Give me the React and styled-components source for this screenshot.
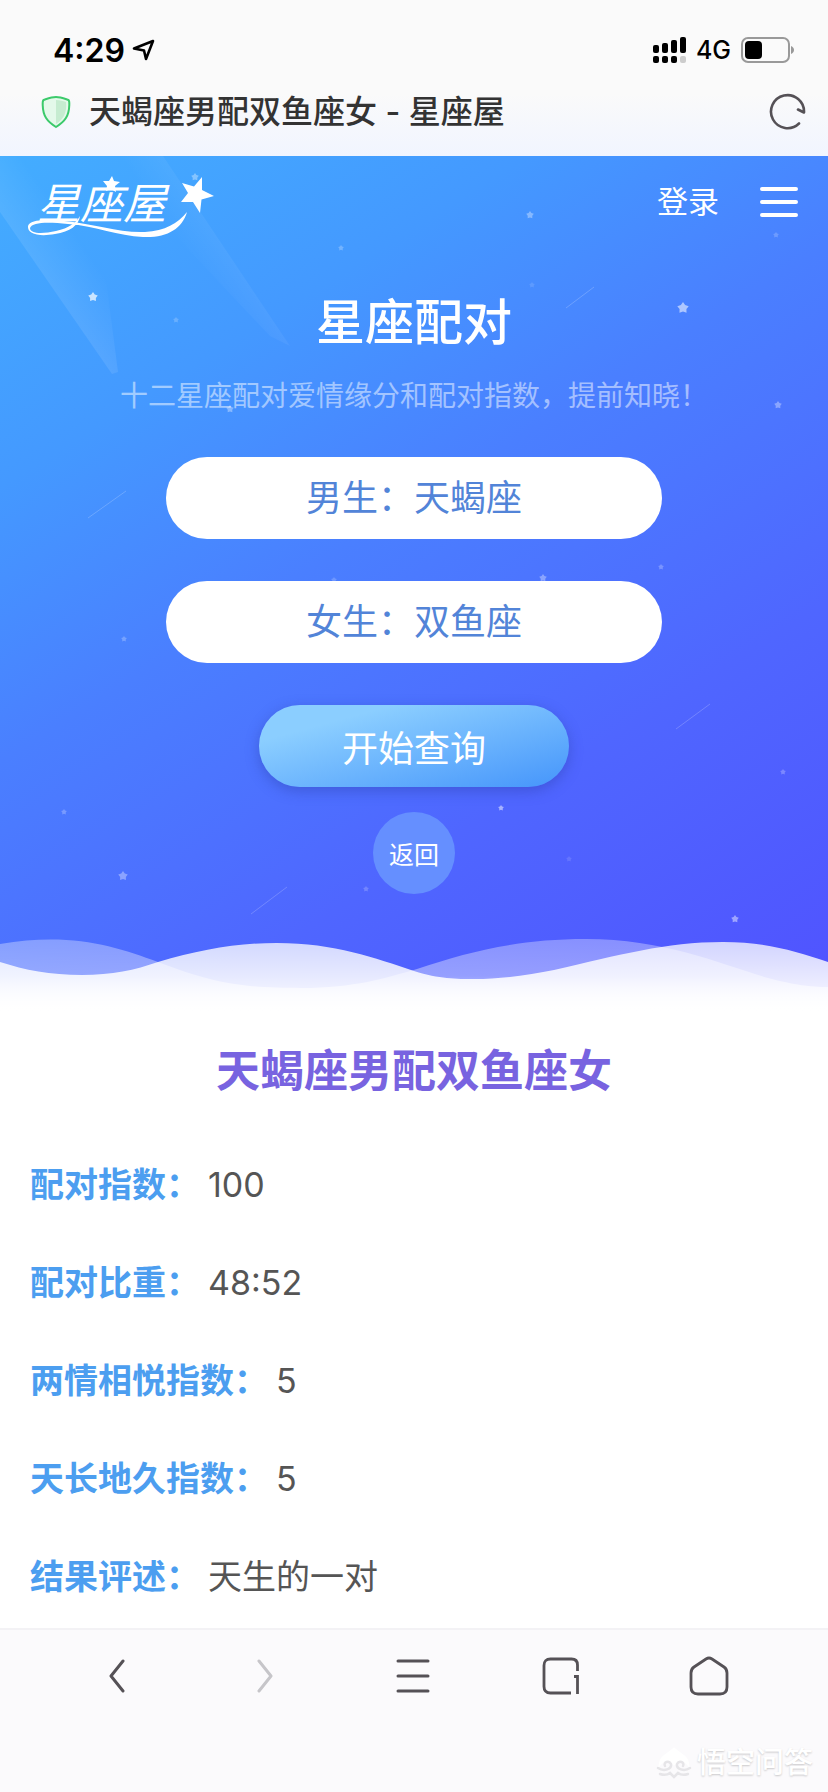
import React, { useState } from 'react';
import styled, { createGlobalStyle } from 'styled-components';

const GlobalStyle = createGlobalStyle`
  * {
    box-sizing: border-box;
  }

  body {
    margin: 0;
    background: #fff;
    font-family: Inter, 'Noto Sans CJK SC', sans-serif;
  }

  h1, h2, p, dl, dd {
    margin: 0;
  }

  svg {
    display: block;
  }
`;

const signs = [
  '白羊座', '金牛座', '双子座', '巨蟹座', '狮子座', '处女座',
  '天秤座', '天蝎座', '射手座', '摩羯座', '水瓶座', '双鱼座',
];

const results = [
  { label: '配对指数：', value: '100' },
  { label: '配对比重：', value: '48:52' },
  { label: '两情相悦指数：', value: '5' },
  { label: '天长地久指数：', value: '5' },
  { label: '结果评述：', value: '天生的一对' },
];

// x, y, radius, opacity
const stars = [
  [93, 141, 5, 0.7],
  [195, 21, 4, 0.35],
  [341, 92, 3, 0.25],
  [530, 59, 4, 0.35],
  [776, 79, 3, 0.2],
  [176, 164, 3, 0.2],
  [532, 129, 3, 0.12],
  [683, 152, 6, 0.55],
  [778, 249, 4, 0.35],
  [230, 253, 4, 0.35],
  [661, 411, 3, 0.25],
  [543, 422, 4, 0.35],
  [334, 424, 3, 0.2],
  [124, 483, 3, 0.25],
  [783, 616, 3, 0.25],
  [501, 652, 3, 0.5],
  [64, 656, 3, 0.25],
  [123, 720, 5, 0.35],
  [366, 733, 3, 0.2],
  [569, 703, 3, 0.12],
  [735, 763, 4, 0.45],
];

const meteors = [
  'M88 362L126 335',
  'M566 152L594 131',
  'M676 573L710 548',
  'M251 758L287 731',
];

const Page = styled.div`
  display: flex;
  flex-direction: column;
  min-height: 100vh;
`;

const BrowserHeader = styled.header`
  height: 156px;
  padding-top: 28px;
  background: linear-gradient(#fafafa 60%, #f1f5ff);
`;

const StatusBar = styled.div`
  display: flex;
  align-items: center;
  justify-content: space-between;
  height: 44px;
  padding: 0 33px 0 53px;
`;

const StatusGroup = styled.div`
  display: flex;
  align-items: center;
  gap: ${props => props.$gap || 7}px;
  font-size: ${props => props.$size || 32}px;
  font-weight: ${props => props.$weight || 600};
  color: #000;
`;

const AddressBar = styled.div`
  display: flex;
  align-items: center;
  gap: 18px;
  height: 80px;
  padding: 0 22px 0 41px;
`;

const PageTitle = styled.div`
  flex: 1;
  font-size: 32px;
  font-weight: 500;
  line-height: 48px;
  color: #333;
`;

const IconButton = styled.button`
  display: flex;
  align-items: center;
  justify-content: center;
  padding: 0;
  border: none;
  background: none;
  color: ${props => props.$color || '#555156'};
  cursor: pointer;

  &:disabled {
    color: #c6c5c9;
    cursor: default;
  }
`;

const Hero = styled.section`
  position: relative;
  overflow: hidden;
  background: linear-gradient(148deg, #43adff 0%, #4499ff 24%, #4a7fff 44%, #4f66ff 70%, #5052ff 100%);
`;

const Sky = styled.svg`
  position: absolute;
  top: 0;
  left: 0;
  width: 100%;
  height: 100%;
`;

const HeroContent = styled.div`
  position: relative;
  display: flex;
  flex-direction: column;
  align-items: center;
`;

const SiteNav = styled.nav`
  display: flex;
  align-items: center;
  gap: 40px;
  width: 100%;
  height: 92px;
  padding: 0 29px 0 26px;
`;

const LogoLink = styled.a`
  margin-right: auto;
`;

const LoginLink = styled.a`
  font-size: 31px;
  line-height: 44px;
  color: #fff;
  text-decoration: none;
`;

const HeroTitle = styled.h1`
  margin-top: 43px;
  font-size: 49px;
  font-weight: 500;
  line-height: 64px;
  color: #fff;
`;

const HeroText = styled.p`
  margin-top: 21px;
  font-size: 28px;
  line-height: 40px;
  white-space: nowrap;
  color: rgba(255, 255, 255, 0.5);
`;

const MatchForm = styled.form`
  display: flex;
  flex-direction: column;
  align-items: center;
  gap: 42px;
  width: 60%;
  margin-top: 41px;
`;

const SignSelect = styled.select`
  appearance: none;
  width: 100%;
  height: 82px;
  padding: 0;
  border: none;
  border-radius: 41px;
  background: #fff;
  font-family: inherit;
  font-size: 36px;
  text-align: center;
  text-align-last: center;
  color: #5284d8;
  cursor: pointer;
`;

const SubmitButton = styled.button`
  width: 310px;
  height: 82px;
  padding: 0;
  border: none;
  border-radius: 41px;
  background: linear-gradient(165deg, #8bceff 22%, #4595fb 100%);
  box-shadow: 0 4px 14px rgba(40, 60, 160, 0.4);
  font-family: inherit;
  font-size: 36px;
  color: #fff;
  cursor: pointer;
`;

const BackButton = styled.button`
  width: 82px;
  height: 82px;
  margin-top: 25px;
  padding: 0;
  border: none;
  border-radius: 50%;
  background: #658fff;
  font-family: inherit;
  font-size: 25px;
  color: #fff;
  cursor: pointer;
`;

const Wave = styled.svg`
  width: 100%;
  height: 80px;
  margin-top: 42px;
`;

const Result = styled.main`
  flex: 1;
  padding: 25px 30px 0;
  background: #fff;
`;

const ResultTitle = styled.h2`
  font-size: 44px;
  font-weight: 700;
  line-height: 60px;
  text-align: center;
  color: #7863e0;
`;

const ResultList = styled.dl`
  margin-top: 35px;
`;

const ResultRow = styled.div`
  display: flex;
  gap: 8px;
  font-size: 34px;
  line-height: 98px;
`;

const ResultLabel = styled.dt`
  font-weight: 700;
  color: #4c9ef0;
`;

const ResultValue = styled.dd`
  color: #555;
`;

const Toolbar = styled.footer`
  height: 164px;
  border-top: 2px solid #f3f2f5;
  background: #fbfafc;
`;

const ToolbarButtons = styled.div`
  display: flex;
  justify-content: space-between;
  height: 92px;
  padding: 0 95px 0 93px;
`;

const ToolButton = styled(IconButton)`
  width: 48px;
`;

const Watermark = styled.div`
  display: flex;
  align-items: center;
  justify-content: flex-end;
  gap: 5px;
  margin-top: 19px;
  padding-right: 15px;
  font-size: 29px;
  font-weight: 500;
  line-height: 44px;
  color: #fff;
  text-shadow: 0 1px 2px rgba(0, 0, 0, 0.2);
`;

const starPath = (cx, cy, r) => {
  const points = Array.from({ length: 10 }, (_, i) => {
    const radius = i % 2 ? r * 0.6 : r;
    const angle = (Math.PI / 5) * i - Math.PI / 2;
    return `${cx + radius * Math.cos(angle)} ${cy + radius * Math.sin(angle)}`;
  });
  return `M${points.join('L')}Z`;
};

const LocationIcon = () => (
  <svg width="23" height="22" viewBox="0 0 23 22" fill="none" stroke="#000" strokeWidth="2.6" strokeLinejoin="round">
    <path d="M21 2L2 9.500L12 11.500L14 20Z" />
  </svg>
);

const SignalIcon = () => (
  <svg width="34" height="28" viewBox="0 0 34 28">
    <rect x="1" y="9" width="6" height="8" rx="2" />
    <rect x="10" y="7" width="6" height="10" rx="2" />
    <rect x="19" y="4" width="6" height="13" rx="2" />
    <rect x="28" y="1" width="6" height="16" rx="2" />
    <rect x="1" y="20" width="6" height="7" rx="2" />
    <rect x="10" y="20" width="6" height="7" rx="2" />
    <rect x="19" y="20" width="6" height="7" rx="2" />
    <rect x="28" y="20" width="6" height="7" rx="2" fill="#ccc" />
  </svg>
);

const BatteryIcon = () => (
  <svg width="54" height="26" viewBox="0 0 54 26">
    <rect x="1" y="1" width="47" height="24" rx="6" fill="none" stroke="#999" strokeWidth="2" />
    <rect x="4" y="4" width="17" height="18" rx="4" />
    <path d="M50 9C54 10.500 54 15.500 50 17Z" fill="#999" />
  </svg>
);

const ShieldIcon = () => (
  <svg width="30" height="34" viewBox="0 0 30 34">
    <path d="M15 2C19 2 23 3.500 28 5C29 17 26 26 15 32C4 26 1 17 2 5C7 3.500 11 2 15 2Z" fill="#e4f9ea" />
    <path d="M15 5C19 5 22 6 25 7C26 17 23 24 15 29Z" fill="#c6ecd0" />
    <path d="M15 2C19.500 2 23 3.500 27.500 5Q28.500 6 28.300 10C28 21 24 26.500 15 32C6 26.500 2 21 1.700 10Q1.500 6 2.500 5C7 3.500 10.500 2 15 2Z" fill="none" stroke="#3cca6b" strokeWidth="2" />
  </svg>
);

const RefreshIcon = () => (
  <svg width="38" height="38" viewBox="0 0 38 38" fill="none" stroke="currentColor" strokeWidth="2.600" strokeLinecap="round" strokeLinejoin="round">
    <path d="M31 30.500A16.500 16.500 0 1 1 36 19.500L30 16.500" />
  </svg>
);

const Logo = () => (
  <svg width="192" height="78" viewBox="0 -8 192 78" fill="#fff">
    <text x="11" y="48" fontSize="43" fontStyle="italic" fontWeight="400" fontFamily="Noto Sans CJK SC, sans-serif">星座屋</text>
    <path d="M86 5L88 10L94 11L89 15L90 21L85 18L80 20L81 15L77 10L83 10Z" />
    <path d="M176 6L176 19L188 25L175.500 28.500L174 42L167 31L155 31L162 22L156 12L168 15.500Z" />
    <path d="M161 41C156 58 141 67 117 66C92 65 70 55 42 53C22 51 6 51 4 57C4 63 17 63 30 60C43 57 50 52 54 45C53 54 44 61 29 63C13 66 1 63 2 55C4 48 20 49 38 50C70 53 92 62 119 61C139 60 152 52 161 41Z" />
  </svg>
);

const HeroSky = () => (
  <Sky viewBox="0 0 828 860" preserveAspectRatio="xMidYMin slice" fill="#fff" aria-hidden="true">
    <defs>
      <linearGradient id="ray" gradientUnits="userSpaceOnUse" x1="58" y1="138" x2="98" y2="110">
        <stop offset="0" stopColor="#fff" stopOpacity="0.09" />
        <stop offset="1" stopColor="#fff" stopOpacity="0" />
      </linearGradient>
      <linearGradient id="glow" gradientUnits="userSpaceOnUse" x1="210" y1="70" x2="180" y2="90">
        <stop offset="0" stopColor="#fff" stopOpacity="0.05" />
        <stop offset="1" stopColor="#fff" stopOpacity="0" />
      </linearGradient>
    </defs>
    <path d="M0 56L112 218L118 216L90 0L0 0Z" fill="url(#ray)" />
    <path d="M163 0L290 190L270 180L100 0Z" fill="url(#glow)" />
    {stars.map(([x, y, r, opacity]) => (
      <path key={`${x}-${y}`} d={starPath(x, y, r)} opacity={opacity} />
    ))}
    {meteors.map(d => (
      <path key={d} d={d} stroke="#fff" strokeOpacity="0.2" />
    ))}
  </Sky>
);

const HeroWave = () => (
  <Wave viewBox="0 0 828 80" preserveAspectRatio="none" aria-hidden="true">
    <defs>
      <linearGradient id="front" gradientUnits="userSpaceOnUse" x1="0" y1="4" x2="0" y2="76">
        <stop offset="0" stopColor="#fff" stopOpacity="0.74" />
        <stop offset="0.5" stopColor="#fff" stopOpacity="0.86" />
        <stop offset="1" stopColor="#fff" />
      </linearGradient>
      <linearGradient id="back" gradientUnits="userSpaceOnUse" x1="0" y1="4" x2="0" y2="76">
        <stop offset="0" stopColor="#fff" stopOpacity="0.32" />
        <stop offset="0.5" stopColor="#fff" stopOpacity="0.4" />
        <stop offset="1" stopColor="#fff" />
      </linearGradient>
    </defs>
    <path d="M0 8C70 -4 115 10 158 26C215 48 245 52 301 52C355 52 385 42 417 33C470 15 520 3 586 3C665 3 720 28 768 42C795 49 810 51 828 51L828 80L0 80Z" fill="url(#back)" />
    <path d="M0 26C25 34 50 39 82 39C112 39 135 34 158 26C200 14 235 7 277 7C335 7 375 22 414 35C440 43 455 43 475 43C500 43 530 39 554 34C620 19 665 6 723 6C765 6 795 15 828 26L828 80L0 80Z" fill="url(#front)" />
  </Wave>
);

const WatermarkIcon = () => (
  <svg width="36" height="32" viewBox="0 0 36 32" fill="none" stroke="#e6e5e8" strokeWidth="2.500" strokeLinecap="round">
    <path d="M4 17C5 9 12 8 18 2C24 8 31 9 32 17C28 12 23 12 18 17C13 12 8 12 4 17Z" fill="#fff" stroke="#fff" />
    <path d="M2 21C8 25 16 22 15 17C13 13 7 15 9 19M34 21C28 25 20 22 21 17C23 13 29 15 27 19" />
    <path d="M4 27Q10 29 14 26L18 30L22 26Q26 29 32 27" />
  </svg>
);

const App = () => {
  const [male, setMale] = useState('天蝎座');
  const [female, setFemale] = useState('双鱼座');

  const handleSubmit = (event) => {
    event.preventDefault();
  };

  return (
    <Page>
      <GlobalStyle />
      <BrowserHeader>
        <StatusBar>
          <StatusGroup>
            4:29
            <LocationIcon />
          </StatusGroup>
          <StatusGroup $size={25} $weight={500} $gap={10}>
            <SignalIcon />
            4G
            <BatteryIcon />
          </StatusGroup>
        </StatusBar>
        <AddressBar>
          <ShieldIcon />
          <PageTitle>天蝎座男配双鱼座女 - 星座屋</PageTitle>
          <IconButton type="button" aria-label="刷新">
            <RefreshIcon />
          </IconButton>
        </AddressBar>
      </BrowserHeader>

      <Hero>
        <HeroSky />
        <HeroContent>
          <SiteNav>
            <LogoLink href="#" aria-label="星座屋">
              <Logo />
            </LogoLink>
            <LoginLink href="#">登录</LoginLink>
            <IconButton type="button" $color="#fff" aria-label="菜单">
              <svg width="40" height="32" viewBox="0 0 40 32" stroke="currentColor" strokeWidth="4" strokeLinecap="round">
                <path d="M3 3H37M3 16H37M3 29H37" />
              </svg>
            </IconButton>
          </SiteNav>
          <HeroTitle>星座配对</HeroTitle>
          <HeroText>十二星座配对爱情缘分和配对指数，提前知晓！</HeroText>
          <MatchForm onSubmit={handleSubmit}>
            <SignSelect aria-label="男生" value={male} onChange={(e) => setMale(e.target.value)}>
              {signs.map(sign => (
                <option key={sign} value={sign}>男生：{sign}</option>
              ))}
            </SignSelect>
            <SignSelect aria-label="女生" value={female} onChange={(e) => setFemale(e.target.value)}>
              {signs.map(sign => (
                <option key={sign} value={sign}>女生：{sign}</option>
              ))}
            </SignSelect>
            <SubmitButton type="submit">开始查询</SubmitButton>
          </MatchForm>
          <BackButton type="button">返回</BackButton>
          <HeroWave />
        </HeroContent>
      </Hero>

      <Result>
        <ResultTitle>天蝎座男配双鱼座女</ResultTitle>
        <ResultList>
          {results.map(item => (
            <ResultRow key={item.label}>
              <ResultLabel>{item.label}</ResultLabel>
              <ResultValue>{item.value}</ResultValue>
            </ResultRow>
          ))}
        </ResultList>
      </Result>

      <Toolbar>
        <ToolbarButtons>
          <ToolButton type="button" aria-label="后退">
            <svg width="16" height="34" viewBox="0 0 16 34" fill="none" stroke="currentColor" strokeWidth="3" strokeLinecap="round" strokeLinejoin="round">
              <path d="M14 2L2 17L14 32" />
            </svg>
          </ToolButton>
          <ToolButton type="button" aria-label="前进" disabled>
            <svg width="16" height="34" viewBox="0 0 16 34" fill="none" stroke="currentColor" strokeWidth="3" strokeLinecap="round" strokeLinejoin="round">
              <path d="M2 2L14 17L2 32" />
            </svg>
          </ToolButton>
          <ToolButton type="button" aria-label="菜单">
            <svg width="34" height="34" viewBox="0 0 34 34" stroke="currentColor" strokeWidth="3" strokeLinecap="round">
              <path d="M2 2H32M2 17H32M2 32H32" />
            </svg>
          </ToolButton>
          <ToolButton type="button" aria-label="窗口">
            <svg width="38" height="38" viewBox="0 0 38 38" fill="none" stroke="currentColor" strokeWidth="2.800">
              <path d="M35.500 14V8Q35.500 2 29.500 2H8.500Q2 2 2 8.500V29.500Q2 36 8.500 36H29M32 19.500H35.500V37" />
            </svg>
          </ToolButton>
          <ToolButton type="button" aria-label="主页">
            <svg width="40" height="40" viewBox="0 0 40 40" fill="none" stroke="currentColor" strokeWidth="2.800" strokeLinejoin="round">
              <path d="M17 3Q20 1 23 3L35 11Q38 13 38 17V31Q38 38 31 38H9Q2 38 2 31V17Q2 13 5 11Z" />
            </svg>
          </ToolButton>
        </ToolbarButtons>
        <Watermark>
          <WatermarkIcon />
          悟空问答
        </Watermark>
      </Toolbar>
    </Page>
  );
};

export default App;
